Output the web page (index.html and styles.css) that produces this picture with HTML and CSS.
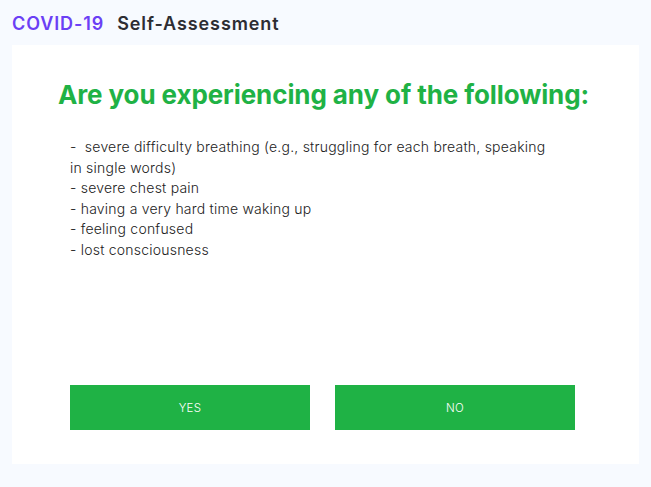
FILE: index.html
```html
<!DOCTYPE html>
<html lang="en">
<head>
<meta charset="utf-8">
<title>COVID-19 Self-Assessment</title>
<link rel="stylesheet" href="styles.css">
</head>
<body>
<header class="topbar">
  <span class="brand">COVID-19</span>
  <span class="title">Self-Assessment</span>
</header>
<main class="card">
  <h1 class="question">Are you experiencing any of the following:</h1>
  <div class="symptoms">
    <p>- &nbsp;severe difficulty breathing (e.g., struggling for each breath, speaking in single words)</p>
    <p>- severe chest pain</p>
    <p>- having a very hard time waking up</p>
    <p>- feeling confused</p>
    <p>- lost consciousness</p>
  </div>
  <div class="actions">
    <button class="btn">YES</button>
    <button class="btn">NO</button>
  </div>
</main>
</body>
</html>
```

FILE: styles.css
```css
* { box-sizing: border-box; }
html, body { margin: 0; padding: 0; }
body {
  background: #f7faff;
  font-family: Inter, "Noto Sans", sans-serif;
  width: 651px;
  height: 487px;
  overflow: hidden;
}
.topbar {
  height: 45px;
  padding: 12px 12px 0;
  display: flex;
  gap: 13px;
  font-size: 18px;
  font-weight: 600;
  line-height: 24px;
  letter-spacing: 0.9px;
}
.brand { color: #6b3ff5; }
.title { color: #2d2d33; }
.card {
  margin: 0 12px;
  height: 419px;
  background: #ffffff;
  display: flex;
  flex-direction: column;
  padding: 34px 0 34px;
}
.question {
  margin: 0;
  text-align: center;
  color: #1fb245;
  font-size: 26px;
  font-weight: 700;
  line-height: 32px;
  letter-spacing: -0.1px;
  padding-right: 4px;
}
.symptoms {
  margin: 26px 0 0 58px;
  width: 488px;
  font-size: 14px;
  font-weight: 300;
  line-height: 20.6px;
  letter-spacing: 0.22px;
  color: #222;
}
.symptoms p { margin: 0; }
.actions {
  margin-top: auto;
  padding-left: 58px;
  display: flex;
  gap: 25px;
}
.btn {
  width: 240px;
  height: 45px;
  border: 0;
  background: #1fb245;
  color: #fff;
  font-family: Inter, "Noto Sans", sans-serif;
  font-size: 11.5px;
  font-weight: 300;
  letter-spacing: 0.3px;
}
```
